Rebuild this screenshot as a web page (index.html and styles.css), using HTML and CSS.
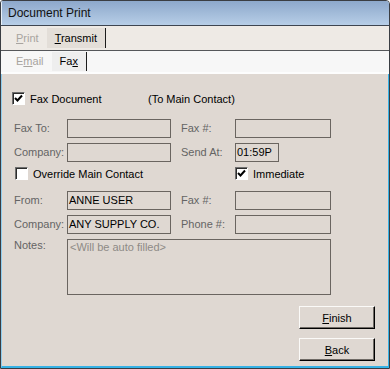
FILE: index.html
```html
<!DOCTYPE html>
<html lang="en">
<head>
    <meta charset="UTF-8">
    <title>Document Print</title>
    <link rel="stylesheet" href="styles.css">
</head>
<body>
<div class="window">
    <div class="titlebar">Document Print</div>

    <div class="tabs tabs-main">
        <span class="tab disabled"><u>P</u>rint</span>
        <span class="tab active"><u>T</u>ransmit</span>
    </div>
    <div class="tabs tabs-sub">
        <span class="tab disabled">E<u>m</u>ail</span>
        <span class="tab active">Fa<u>x</u></span>
    </div>

    <div class="panel">
        <div class="head-row">
            <label class="check-label head-check">
                <span class="checkbox checked"><svg viewBox="0 0 11 11"><polyline points="2,5 4.5,7.5 9,2.5" /></svg></span>
                Fax Document
            </label>
            <span>(To Main Contact)</span>
        </div>

        <div class="form">
            <span class="lbl">Fax To:</span>
            <div class="field"></div>
            <span class="lbl lbl-right">Fax #:</span>
            <div class="field"></div>

            <span class="lbl">Company:</span>
            <div class="field"></div>
            <span class="lbl lbl-right">Send At:</span>
            <div class="field field-time">01:59P</div>

            <label class="check-label override">
                <span class="checkbox"></span>
                Override Main Contact
            </label>
            <label class="check-label immediate">
                <span class="checkbox checked"><svg viewBox="0 0 11 11"><polyline points="2,5 4.5,7.5 9,2.5" /></svg></span>
                Immediate
            </label>

            <span class="lbl">From:</span>
            <div class="field">ANNE USER</div>
            <span class="lbl lbl-right">Fax #:</span>
            <div class="field"></div>

            <span class="lbl">Company:</span>
            <div class="field">ANY SUPPLY CO.</div>
            <span class="lbl lbl-right">Phone #:</span>
            <div class="field"></div>

            <span class="lbl lbl-notes">Notes:</span>
            <div class="field notes">&lt;Will be auto filled&gt;</div>
        </div>

        <div class="buttons">
            <button class="btn"><u>F</u>inish</button>
            <button class="btn"><u>B</u>ack</button>
        </div>
    </div>
</div>
</body>
</html>
```

FILE: styles.css
```css
html, body {
    margin: 0;
    padding: 0;
    background: #fff;
}

body {
    font-family: "Liberation Sans", Arial, sans-serif;
    font-size: 11px;
    color: #000;
}

.window {
    width: 390px;
    height: 369px;
    box-sizing: border-box;
    border: 1px solid #3a3d42;
    border-radius: 3px 4px 0 0;
    display: flex;
    flex-direction: column;
    overflow: hidden;
}

.titlebar {
    height: 24px;
    line-height: 24px;
    padding-left: 7px;
    font-size: 12px;
    color: #111;
    background: linear-gradient(#8da8cb, #b7cee7);
    border-bottom: 1px solid #3e4550;
    box-shadow: inset 1px 0 #e8f0f8;
}

.tabs {
    display: flex;
    align-items: center;
    padding-left: 7px;
}

.tabs-main {
    height: 24px;
    background: #eeeae5;
    border-bottom: 1px solid #55575a;
}

.tabs-sub {
    height: 21px;
    background: #f7f7f7;
    border-bottom: 2px solid #fdfdfd;
}

.tab {
    padding: 0 8px;
    line-height: 20px;
    height: 20px;
}

.tabs-sub .tab {
    height: 19px;
    line-height: 19px;
}

.tab.disabled {
    color: #a8a49f;
}

.tab.active {
    border-right: 1px solid #1c1c1c;
}

.tabs-main .tab.active {
    background: #e3ded8;
}

.tabs-sub .tab.active {
    background: #eeeeee;
}

.panel {
    flex: 1;
    background: #dfd8d2;
    border-left: 1px solid #8fcdee;
    border-right: 1px solid #36b2e6;
    border-bottom: 2px solid #36b2e6;
    padding: 18px 13px 0 10px;
    display: flex;
    flex-direction: column;
}

.head-row {
    display: flex;
    align-items: center;
    height: 13px;
    margin-bottom: 14px;
}

.head-check {
    width: 136px;
}

.check-label {
    display: flex;
    align-items: center;
    gap: 5px;
}

.checkbox {
    width: 11px;
    height: 11px;
    flex: none;
    background: #fff;
    border: 1px solid;
    border-color: #6e6e6e #fff #fff #6e6e6e;
    box-shadow: inset 1px 1px #2c2c2c;
    display: flex;
}

.checkbox svg {
    width: 11px;
    height: 11px;
}

.checkbox polyline {
    fill: none;
    stroke: #000;
    stroke-width: 2;
}

.form {
    display: grid;
    grid-template-columns: 55px 104px 64px 96px;
    grid-template-rows: repeat(5, 19px) 56px;
    row-gap: 5px;
}

.lbl {
    color: #646464;
    padding-left: 2px;
    line-height: 19px;
}

.lbl-right {
    padding-left: 10px;
}

.lbl-notes {
    line-height: 11px;
    padding-top: 1px;
}

.field {
    box-sizing: border-box;
    border: 1px solid #6a6560;
    padding-left: 1px;
    line-height: 17px;
    white-space: nowrap;
    overflow: hidden;
}

.field-time {
    width: 44px;
}

.override {
    grid-column: 1 / 3;
    padding-left: 3px;
    align-self: start;
}

.immediate {
    grid-column: 4;
    align-self: start;
}

.notes {
    grid-column: 2 / 5;
    padding-left: 2px;
    line-height: 14px;
    color: #8e8a86;
}

.buttons {
    display: flex;
    flex-direction: column;
    align-items: flex-end;
    gap: 9px;
    margin-top: 11px;
}

.btn {
    width: 76px;
    height: 23px;
    box-sizing: border-box;
    font-family: "Liberation Sans", Arial, sans-serif;
    font-size: 11px;
    color: #000;
    background: #dfd8d2;
    border: 1px solid;
    border-color: #fbfaf8 #000 #000 #fbfaf8;
    box-shadow: inset -1px -1px #6f6a65;
    padding: 0;
}
```
